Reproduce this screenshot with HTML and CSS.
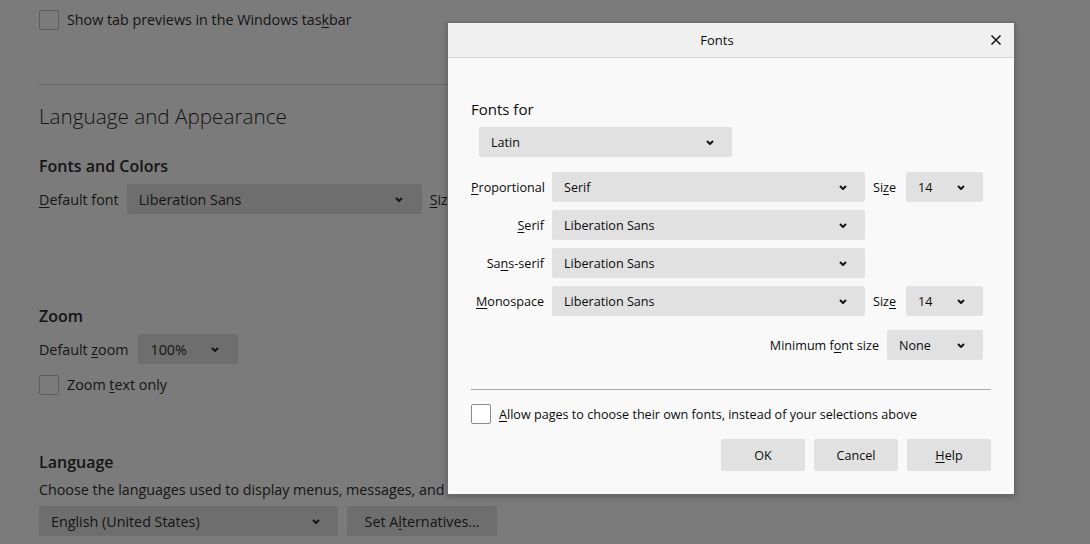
FILE: index.html
```html
<!DOCTYPE html>
<html>
<head>
<meta charset="utf-8">
<link rel="stylesheet" href="styles.css">
</head>
<body>
<div class="prefs">
  <label class="check-row first"><span class="box"></span><span>Show tab previews in the Windows tas<u>k</u>bar</span></label>
  <div class="sep"></div>
  <h1 class="title">Language and Appearance</h1>
  <h2 class="sub fonts-colors">Fonts and Colors</h2>
  <div class="row r-font">
    <span class="lbl"><u>D</u>efault font</span>
    <div class="sel bg-sel w-font"><span>Liberation Sans</span><svg class="chev" viewBox="0 0 8 5"><path d="M1 1l3 3 3-3"/></svg></div>
    <span class="lbl"><u>S</u>ize</span>
  </div>
  <h2 class="sub zoom-h">Zoom</h2>
  <div class="row r-zoom">
    <span class="lbl">Default <u>z</u>oom</span>
    <div class="sel bg-sel w-zoom"><span>100%</span><svg class="chev" viewBox="0 0 8 5"><path d="M1 1l3 3 3-3"/></svg></div>
  </div>
  <label class="check-row zoom-text"><span class="box"></span><span>Zoom <u>t</u>ext only</span></label>
  <h2 class="sub lang-h">Language</h2>
  <p class="desc">Choose the languages used to display menus, messages, and notifications from Firefox.</p>
  <div class="row r-lang">
    <div class="sel bg-sel w-lang"><span>English (United States)</span><svg class="chev" viewBox="0 0 8 5"><path d="M1 1l3 3 3-3"/></svg></div>
    <div class="bg-btn">Set A<u>l</u>ternatives…</div>
  </div>
</div>

<div class="dialog">
  <div class="dlg-head">
    <span class="dlg-title">Fonts</span>
    <svg class="close" viewBox="0 0 12 12"><path d="M1.5 1.5l9 9M10.5 1.5l-9 9"/></svg>
  </div>
  <div class="dlg-body">
    <div class="fonts-for">Fonts for</div>
    <div class="sel d-sel w-latin"><span>Latin</span><svg class="chev" viewBox="0 0 8 5"><path d="M1 1l3 3 3-3"/></svg></div>
    <div class="grid">
      <span class="glbl"><u>P</u>roportional</span>
      <div class="sel d-sel"><span>Serif</span><svg class="chev" viewBox="0 0 8 5"><path d="M1 1l3 3 3-3"/></svg></div>
      <span class="slbl">Si<u>z</u>e</span>
      <div class="sel d-sel"><span>14</span><svg class="chev" viewBox="0 0 8 5"><path d="M1 1l3 3 3-3"/></svg></div>

      <span class="glbl"><u>S</u>erif</span>
      <div class="sel d-sel"><span>Liberation Sans</span><svg class="chev" viewBox="0 0 8 5"><path d="M1 1l3 3 3-3"/></svg></div>
      <span></span><span></span>

      <span class="glbl">Sa<u>n</u>s-serif</span>
      <div class="sel d-sel"><span>Liberation Sans</span><svg class="chev" viewBox="0 0 8 5"><path d="M1 1l3 3 3-3"/></svg></div>
      <span></span><span></span>

      <span class="glbl"><u>M</u>onospace</span>
      <div class="sel d-sel"><span>Liberation Sans</span><svg class="chev" viewBox="0 0 8 5"><path d="M1 1l3 3 3-3"/></svg></div>
      <span class="slbl">Siz<u>e</u></span>
      <div class="sel d-sel"><span>14</span><svg class="chev" viewBox="0 0 8 5"><path d="M1 1l3 3 3-3"/></svg></div>
    </div>
    <div class="minrow">
      <span>Minimum f<u>o</u>nt size</span>
      <div class="sel d-sel w-none"><span>None</span><svg class="chev" viewBox="0 0 8 5"><path d="M1 1l3 3 3-3"/></svg></div>
    </div>
    <div class="dsep"></div>
    <label class="dcheck"><span class="dbox"></span><span><u>A</u>llow pages to choose their own fonts, instead of your selections above</span></label>
    <div class="buttons">
      <div class="btn">OK</div>
      <div class="btn">Cancel</div>
      <div class="btn"><u>H</u>elp</div>
    </div>
  </div>
</div>
</body>
</html>
```

FILE: styles.css
```css
html, body {
  margin: 0;
  padding: 0;
}
body {
  width: 1090px;
  height: 544px;
  overflow: hidden;
  background: #7b7b7b;
  font-family: "Open Sans", "Noto Sans", sans-serif;
  font-size: 14.3px;
  color: #141414;
  position: relative;
}
u { text-decoration-thickness: 1px; text-underline-offset: 2px; }

.prefs {
  padding: 10px 0 0 39px;
  width: 700px;
}
.check-row {
  display: flex;
  align-items: center;
  gap: 8px;
  height: 20px;
  line-height: 20px;
}
.box {
  width: 18px;
  height: 18px;
  border: 1px solid #5e5e5e;
  border-radius: 2px;
  box-sizing: content-box;
}
.sep {
  margin-top: 54px;
  height: 1px;
  background: #6a6a6a;
}
.title {
  margin: 16px 0 0;
  font-size: 20.7px;
  font-weight: 300;
  line-height: 30px;
}
.sub {
  margin: 0;
  font-size: 16px;
  font-weight: 600;
  line-height: 24px;
}
.fonts-colors { margin-top: 23px; }
.zoom-h { margin-top: 90px; }
.lang-h { margin-top: 55px; }
.row {
  display: flex;
  align-items: center;
  gap: 8px;
  margin-top: 6px;
  height: 30px;
}
.sel {
  display: flex;
  align-items: center;
  justify-content: space-between;
  height: 30px;
  box-sizing: border-box;
  border-radius: 2px;
  padding: 0 19px 0 12px;
}
.bg-sel { background: #6e6e6e; }
.chev {
  width: 8px;
  height: 5px;
  fill: none;
  stroke: #141414;
  stroke-width: 2;
}
.w-font { width: 295px; }
.w-zoom { width: 100px; margin-left: 2px; }
.zoom-text { margin-top: 11px; }
.desc {
  margin: 6px 0 0;
  line-height: 20px;
  white-space: nowrap;
}
.r-lang { margin-top: 6px; gap: 9px; }
.w-lang { width: 299px; padding-right: 18px; }
.bg-btn {
  height: 30px;
  width: 150px;
  background: #6e6e6e;
  border-radius: 2px;
  display: flex;
  align-items: center;
  justify-content: center;
}

/* dialog */
.dialog {
  position: absolute;
  left: 447px;
  top: 22px;
  width: 568px;
  height: 473px;
  box-sizing: border-box;
  background: #f9f9f9;
  border: 1px solid #6a6a6a;
  box-shadow: 0 2px 6px rgba(0,0,0,0.25);
  color: #0c0c0d;
  font-size: 12.6px;
}
.dlg-head {
  height: 35px;
  box-sizing: border-box;
  background: #f0f0f0;
  border-bottom: 1px solid #d5d5d5;
  display: flex;
  align-items: center;
  justify-content: center;
  padding-right: 28px;
  position: relative;
}
.dlg-title { font-size: 13px; }
.close {
  position: absolute;
  right: 12px;
  top: 11px;
  width: 12px;
  height: 12px;
  fill: none;
  stroke: #1a1a1a;
  stroke-width: 1.6;
}
.dlg-body {
  padding: 41px 23px 0 23px;
}
.fonts-for {
  font-size: 15px;
  line-height: 20px;
}
.d-sel { background: #e1e1e1; padding-right: 18px; }
.w-latin {
  width: 253px;
  margin: 8px 0 0 8px;
}
.grid {
  margin-top: 15px;
  display: grid;
  grid-template-columns: 73px 313px 25px 77px;
  grid-auto-rows: 30px;
  column-gap: 8px;
  row-gap: 8px;
  align-items: center;
}
.glbl { text-align: right; white-space: nowrap; }
.slbl { white-space: nowrap; }
.minrow {
  margin-top: 14px;
  display: flex;
  justify-content: flex-end;
  align-items: center;
  gap: 8px;
  padding-right: 8px;
}
.w-none { width: 96px; }
.dsep {
  margin-top: 29px;
  height: 1px;
  background: #a8a8a8;
}
.dcheck {
  margin-top: 14px;
  display: flex;
  align-items: center;
  gap: 8px;
  height: 20px;
}
.dbox {
  width: 18px;
  height: 18px;
  border: 1px solid #8a8a8a;
  border-radius: 2px;
  background: #ffffff;
}
.buttons {
  margin-top: 15px;
  display: flex;
  justify-content: flex-end;
  gap: 9px;
}
.btn {
  width: 84px;
  height: 32px;
  background: #e1e1e1;
  border-radius: 2px;
  display: flex;
  align-items: center;
  justify-content: center;
}
```
